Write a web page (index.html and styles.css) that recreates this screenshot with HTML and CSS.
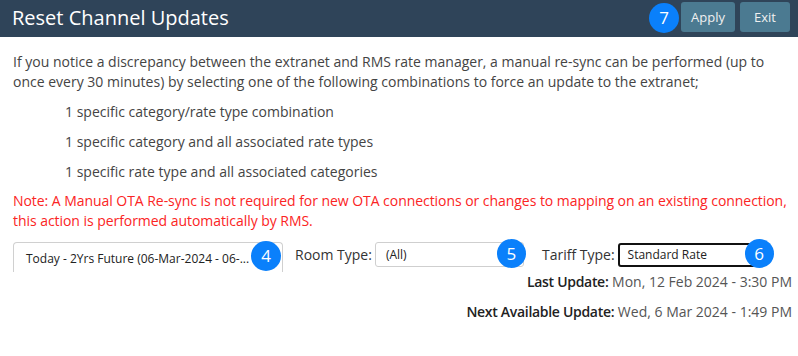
FILE: index.html
```html
<!DOCTYPE html>
<html>
<head>
<meta charset="utf-8">
<link rel="stylesheet" href="styles.css">
</head>
<body>
<div class="header">
  <div class="title">Reset Channel Updates</div>
  <div class="actions">
    <span class="badge badge-inline">7</span>
    <button class="btn apply">Apply</button>
    <button class="btn exit">Exit</button>
  </div>
</div>
<div class="content">
  <p class="intro">If you notice a discrepancy between the extranet and RMS rate manager, a manual re-sync can be performed (up to once every 30 minutes) by selecting one of the following combinations to force an update to the extranet;</p>
  <ul class="options">
    <li>1 specific category/rate type combination</li>
    <li>1 specific category and all associated rate types</li>
    <li>1 specific rate type and all associated categories</li>
  </ul>
  <p class="note">Note: A Manual OTA Re-sync is not required for new OTA connections or changes to mapping on an existing connection, this action is performed automatically by RMS.</p>
  <div class="controls">
    <div class="datebox">
      <span class="datetext">Today - 2Yrs Future (06-Mar-2024 - 06-...</span>
      <span class="badge badge-date">4</span>
    </div>
    <label class="field-label room-label">Room Type:</label>
    <div class="select room-select">
      <span>(All)</span>
      <span class="badge badge-room">5</span>
    </div>
    <label class="field-label tariff-label">Tariff Type:</label>
    <div class="select tariff-select">
      <span>Standard Rate</span>
      <span class="badge badge-tariff">6</span>
    </div>
  </div>
  <div class="info">
    <div class="info-line"><b>Last Update:</b> Mon, 12 Feb 2024 - 3:30 PM</div>
    <div class="info-line"><b>Next Available Update:</b> Wed, 6 Mar 2024 - 1:49 PM</div>
  </div>
</div>
</body>
</html>
```
FILE: styles.css
```css
html, body {
  margin: 0;
  padding: 0;
  background: #ffffff;
  font-family: "Open Sans", "Noto Sans", sans-serif;
  color: #3a3a3a;
}
.header {
  height: 37px;
  background: #2f4459;
  display: flex;
  align-items: center;
  justify-content: space-between;
  padding: 0 8px 0 12px;
}
.title {
  color: #ffffff;
  font-size: 20px;
  line-height: 37px;
  margin-top: -2px;
}
.actions {
  display: flex;
  align-items: center;
  gap: 5px;
  margin-top: -4px;
}
.btn {
  font-family: "Open Sans", "Noto Sans", sans-serif;
  font-size: 13px;
  color: #f0f0f0;
  background: #4b7a91;
  border: none;
  border-radius: 3px;
  height: 30px;
  padding: 0 9px;
  cursor: pointer;
}
.apply { width: 54px; }
.exit { width: 50px; }
.badge {
  width: 30px;
  height: 30px;
  border-radius: 50%;
  background: #0a80fb;
  color: #ffffff;
  font-size: 17px;
  line-height: 30px;
  text-align: center;
  display: inline-block;
}
.badge-inline {
  margin-right: -3px;
  margin-top: 2px;
}
.content {
  padding: 0 6px 0 13px;
}
.intro {
  margin: 15px 0 0;
  font-size: 14px;
  line-height: 20px;
  color: #444;
}
.options {
  list-style: none;
  margin: 0;
  padding: 0 0 0 52px;
}
.options li {
  font-size: 14px;
  line-height: 20px;
  margin-top: 10px;
  color: #444;
}
.note {
  margin: 9px -4px 0 0;
  font-size: 14px;
  line-height: 20px;
  color: #fb2424;
  letter-spacing: -0.05px;
}
.controls {
  display: flex;
  align-items: flex-start;
  margin-top: 11px;
  height: 30px;
}
.datebox {
  position: relative;
  box-sizing: border-box;
  width: 270px;
  height: 30px;
  border: 1px solid #d0d0d0;
  border-bottom: none;
  border-radius: 4px 4px 0 0;
  padding-left: 12px;
  font-size: 12px;
  line-height: 32px;
  color: #222;
}
.badge-date {
  position: absolute;
  right: 1px;
  top: -2px;
}
.field-label {
  font-size: 14px;
  line-height: 25px;
  color: #333;
}
.room-label { margin-left: 12px; margin-right: 3px; }
.tariff-label { margin-left: 18px; margin-right: 3px; }
.select {
  position: relative;
  box-sizing: border-box;
  height: 25px;
  font-size: 12px;
  line-height: 23px;
  color: #222;
  border-radius: 3px;
}
.room-select {
  width: 149px;
  border: 1px solid #cfcfcf;
  padding-left: 10px;
}
.tariff-select {
  width: 138px;
  margin-top: 1px;
  height: 24px;
  border: 2px solid #111;
  padding-left: 8px;
  line-height: 20px;
}
.badge-room {
  position: absolute;
  right: -3px;
  top: -4px;
  width: 29px;
  height: 29px;
  line-height: 29px;
}
.badge-tariff {
  position: absolute;
  right: -20px;
  top: -6px;
  width: 29px;
  height: 29px;
  line-height: 29px;
}
.info {
  text-align: right;
}
.info-line {
  font-size: 14px;
  line-height: 20px;
  color: #555;
  margin-bottom: 10px;
}
.info-line b {
  font-weight: 600;
  color: #222;
  letter-spacing: -0.3px;
}
```
